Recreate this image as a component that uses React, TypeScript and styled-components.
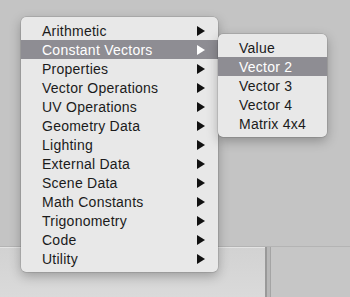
import { createGlobalStyle, styled } from 'styled-components';

const GlobalStyle = createGlobalStyle`
  html, body {
    margin: 0;
    padding: 0;
  }
  body {
    width: 350px;
    height: 297px;
    overflow: hidden;
    font-family: 'Liberation Sans', Arial, sans-serif;
  }
`;

const Screen = styled.div`
  position: relative;
  width: 350px;
  height: 297px;
  display: flex;
  flex-direction: column;
  background: #c4c4c4;
`;

const Canvas = styled.div`
  height: 246px;
  background: #c4c4c4;
  border-bottom: 1px solid #b4b4b4;
`;

const BottomRow = styled.div`
  flex: 1;
  display: flex;
`;

const LeftPanel = styled.div`
  width: 265px;
  background: linear-gradient(#d2d2d2, #dadada);
  box-shadow: inset 0 1px 0 #e4e4e4;
`;

const Divider = styled.div`
  width: 6px;
  box-sizing: border-box;
  background: #b8b8b8;
  border-left: 2px solid #999999;
  border-right: 1px solid #a4a4a4;
`;

const RightPanel = styled.div`
  flex: 1;
  background: #c6c6c6;
`;

interface MenuProps {
  $left: number;
  $top: number;
  $width: number;
}

const Menu = styled.div<MenuProps>`
  position: absolute;
  left: ${({ $left }) => $left}px;
  top: ${({ $top }) => $top}px;
  width: ${({ $width }) => $width}px;
  box-sizing: border-box;
  padding: 4px 0;
  background: #e8e8e8;
  border-radius: 5px;
  box-shadow: 0 0 0 0.5px rgba(0, 0, 0, 0.18), 0 4px 12px rgba(0, 0, 0, 0.28);
`;

const Row = styled.div<{ $active?: boolean }>`
  height: 19px;
  display: flex;
  align-items: center;
  justify-content: space-between;
  padding: 0 13px 0 21px;
  font-size: 14px;
  letter-spacing: 0.25px;
  color: ${({ $active }) => ($active ? '#ffffff' : '#1b1b1b')};
  background: ${({ $active }) => ($active ? '#8e8d93' : 'transparent')};
  white-space: nowrap;
`;

const Arrow = ({ color }: { color: string }) => (
  <svg width="8" height="10" viewBox="0 0 8 10">
    <polygon points="0,0 8,5 0,10" fill={color} />
  </svg>
);

const mainItems = [
  'Arithmetic',
  'Constant Vectors',
  'Properties',
  'Vector Operations',
  'UV Operations',
  'Geometry Data',
  'Lighting',
  'External Data',
  'Scene Data',
  'Math Constants',
  'Trigonometry',
  'Code',
  'Utility',
];

const subItems = ['Value', 'Vector 2', 'Vector 3', 'Vector 4', 'Matrix 4x4'];

const App = () => (
  <>
    <GlobalStyle />
    <Screen>
      <Canvas />
      <BottomRow>
        <LeftPanel />
        <Divider />
        <RightPanel />
      </BottomRow>
      <Menu $left={21} $top={17} $width={197}>
        {mainItems.map((label) => {
          const active = label === 'Constant Vectors';
          return (
            <Row key={label} $active={active}>
              <span>{label}</span>
              <Arrow color={active ? '#ffffff' : '#111111'} />
            </Row>
          );
        })}
      </Menu>
      <Menu $left={218} $top={34} $width={109}>
        {subItems.map((label) => (
          <Row key={label} $active={label === 'Vector 2'}>
            <span>{label}</span>
          </Row>
        ))}
      </Menu>
    </Screen>
  </>
);

export default App;
